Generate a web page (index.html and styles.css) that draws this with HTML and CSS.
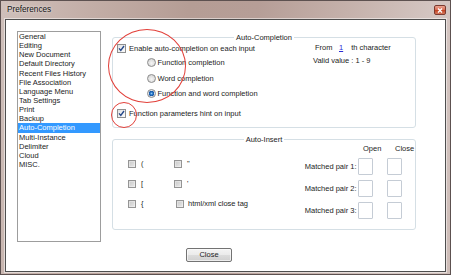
FILE: index.html
```html
<!DOCTYPE html>
<html>
<head>
<meta charset="utf-8">
<title>Preferences</title>
<link rel="stylesheet" href="styles.css">
</head>
<body>
<div class="window">
  <div class="titlebar">
    <span class="title">Preferences</span>
    <span class="winclose"><svg width="6" height="5" viewBox="0 0 6 5"><path d="M1 0.5 L5 4.5 M5 0.5 L1 4.5" stroke="#fff" stroke-width="1.3"/></svg></span>
  </div>
  <div class="client">
    <div class="main">
      <ul class="list">
        <li>General</li>
        <li>Editing</li>
        <li>New Document</li>
        <li>Default Directory</li>
        <li>Recent Files History</li>
        <li>File Association</li>
        <li>Language Menu</li>
        <li>Tab Settings</li>
        <li>Print</li>
        <li>Backup</li>
        <li class="sel">Auto-Completion</li>
        <li>Multi-Instance</li>
        <li>Delimiter</li>
        <li>Cloud</li>
        <li>MISC.</li>
      </ul>
      <div class="panels">
        <section class="group">
          <div class="group-title"><span>Auto-Completion</span></div>
          <div class="g1-body">
            <div class="col-left">
              <div class="row"><span class="cb checked"><svg width="7" height="7" viewBox="0 0 7 7"><path d="M1 3.4 L2.8 5.4 L6 1" fill="none" stroke="#24488a" stroke-width="1.4"/></svg></span>Enable auto-completion on each input</div>
              <div class="radios">
                <div class="row rrow"><span class="rb"></span>Function completion</div>
                <div class="row rrow"><span class="rb"></span>Word completion</div>
                <div class="row rrow"><span class="rb on"></span>Function and word completion</div>
              </div>
              <div class="row hint"><span class="cb checked"><svg width="7" height="7" viewBox="0 0 7 7"><path d="M1 3.4 L2.8 5.4 L6 1" fill="none" stroke="#24488a" stroke-width="1.4"/></svg></span>Function parameters hint on input</div>
            </div>
            <div class="col-right">
              <div class="from">From<span class="num">1</span>th character</div>
              <div>Valid value : 1 - 9</div>
            </div>
          </div>
        </section>
        <section class="group">
          <div class="group-title"><span>Auto-Insert</span></div>
          <div class="g2-body">
            <div class="checks">
              <div class="item"><span class="cb2"></span>(</div>
              <div class="item"><span class="cb2"></span>"</div>
              <div class="item"><span class="cb2"></span>[</div>
              <div class="item"><span class="cb2"></span>'</div>
              <div class="item"><span class="cb2"></span>{</div>
              <div class="item shifted"><span class="cb2"></span>html/xml close tag</div>
            </div>
            <div class="pairs">
              <span></span>
              <span class="head h-open">Open</span>
              <span class="head h-close">Close</span>
              <span class="plabel">Matched pair 1:</span><span class="edit"></span><span class="edit"></span>
              <span class="plabel">Matched pair 2:</span><span class="edit"></span><span class="edit"></span>
              <span class="plabel">Matched pair 3:</span><span class="edit"></span><span class="edit"></span>
            </div>
          </div>
        </section>
      </div>
    </div>
    <div class="footer"><button class="btn">Close</button></div>
  </div>
  <span class="mark big"></span>
  <span class="mark small"></span>
</div>
</body>
</html>
```

FILE: styles.css
```css
html, body {
  margin: 0;
  padding: 0;
  background: #fff;
}
body {
  font-family: "Liberation Sans", Arial, sans-serif;
  font-size: 7.5px;
  line-height: 11px;
  color: #1c1c1c;
}
.window {
  position: relative;
  width: 451px;
  height: 275px;
  box-sizing: border-box;
  border: 1px solid #5d5150;
  padding: 0 4px 2px 4px;
  display: flex;
  flex-direction: column;
  background: linear-gradient(100deg, #cfc0bb 0%, #c3aea7 18%, #b59d95 38%, #b69e97 52%, #c5b1ab 70%, #d4c6c2 88%, #cdbcb7 100%);
}
.titlebar {
  height: 18px;
  display: flex;
  justify-content: space-between;
  align-items: flex-start;
}
.title {
  padding-left: 2px;
  line-height: 18px;
  font-size: 8.2px;
  color: #111;
  text-shadow: 0 0 3px rgba(255, 255, 255, 0.8);
}
.winclose {
  margin-top: 4px;
  width: 12px;
  height: 10px;
  box-sizing: border-box;
  border: 1px solid #7b3a30;
  border-radius: 2px;
  background: linear-gradient(#eba592, #d8684f 50%, #c2401f 52%, #d67a5e);
  display: flex;
  align-items: center;
  justify-content: center;
}
.winclose svg { display: block; }
.client {
  flex: 1;
  background: #fff;
  border: 1px solid #4e4e4e;
  box-shadow: 0 0 0 1px rgba(255, 255, 255, 0.5);
  display: flex;
  flex-direction: column;
}
.main {
  display: flex;
  padding: 11px 0 0 11px;
}
.list {
  margin: 0;
  padding: 0;
  list-style: none;
  width: 84px;
  height: 211px;
  box-sizing: border-box;
  border: 1px solid #9d9d9d;
}
.list li {
  height: 9.15px;
  line-height: 9.15px;
  padding-left: 1px;
  white-space: nowrap;
}
.list li.sel {
  background: #3399ff;
  color: #fff;
}
.panels {
  margin-left: 11px;
  margin-top: 6px;
  width: 304px;
  display: flex;
  flex-direction: column;
  gap: 11px;
}
.group {
  position: relative;
  height: 91px;
  box-sizing: border-box;
  border: 1px solid #d5dfe5;
  border-radius: 3px;
}
.group-title {
  position: absolute;
  top: -6px;
  left: 0;
  right: 0;
  text-align: center;
  line-height: 11px;
}
.group-title span {
  background: #fff;
  padding: 0 2px;
}
.g1-body {
  display: flex;
  padding: 5px 0 0 4px;
}
.col-left {
  width: 196px;
  display: flex;
  flex-direction: column;
}
.row {
  display: flex;
  align-items: center;
  height: 11px;
  gap: 3px;
  white-space: nowrap;
}
.cb {
  width: 9px;
  height: 9px;
  box-sizing: border-box;
  border: 1px solid #8e8f8f;
  background: linear-gradient(135deg, #e2e2e2, #fbfbfb);
  display: flex;
  align-items: center;
  justify-content: center;
}
.cb svg { display: block; }
.radios {
  margin-top: 3px;
  margin-left: 30px;
  display: flex;
  flex-direction: column;
  gap: 4.5px;
}
.rrow { gap: 1.5px; }
.rb {
  width: 9px;
  height: 9px;
  box-sizing: border-box;
  border-radius: 50%;
  border: 1px solid #8c8c8c;
  background: radial-gradient(circle at 50% 60%, #f6f6f6, #cdcdcd);
}
.rb.on {
  background: radial-gradient(circle at 50% 50%, #8ec6f0 0, #2a78c8 1.3px, #124f9c 2.6px, #dfe6ee 3px, #cfd6de 4.5px);
}
.hint {
  margin-top: 9px;
}
.col-right {
  margin-top: -1px;
  line-height: 12.5px;
  white-space: nowrap;
}
.from {
  padding-left: 2px;
}
.num {
  color: #2b2bd6;
  text-decoration: underline;
  margin: 0 8px 0 6.5px;
}
.g2-body {
  display: flex;
  justify-content: space-between;
  padding: 5px 13px 0 15px;
}
.checks {
  margin-top: 13px;
  display: grid;
  grid-template-columns: 46px auto;
  grid-auto-rows: 11px;
  row-gap: 9px;
}
.item {
  display: flex;
  align-items: center;
  gap: 5px;
  white-space: nowrap;
}
.item.shifted {
  margin-left: 2px;
  gap: 4px;
}
.cb2 {
  width: 8px;
  height: 8px;
  box-sizing: border-box;
  border: 1px solid #959595;
  background: linear-gradient(135deg, #c9c9c9, #e9e9e9);
  box-shadow: inset 0 0 0 1px rgba(255, 255, 255, 0.35);
}
.pairs {
  display: grid;
  grid-template-columns: 56px 29px 15px;
  grid-template-rows: 8px 17px 17px 17px;
  row-gap: 5px;
}
.head {
  line-height: 8px;
  white-space: nowrap;
}
.h-open { padding-left: 5px; }
.h-close { padding-left: 8px; }
.plabel {
  align-self: center;
  text-align: right;
  padding-right: 1.5px;
  white-space: nowrap;
}
.edit {
  width: 15px;
  height: 17px;
  box-sizing: border-box;
  border: 1px solid #c5ccd5;
  border-radius: 1px;
  background: #fff;
}
.footer {
  margin-top: 6px;
  padding-left: 180px;
}
.btn {
  width: 46px;
  height: 14px;
  padding: 0;
  margin: 0;
  box-sizing: border-box;
  font-family: "Liberation Sans", Arial, sans-serif;
  font-size: 7.5px;
  line-height: 12px;
  color: #1c1c1c;
  border: 1px solid #737373;
  border-radius: 2px;
  background: linear-gradient(#f4f4f4, #ebebeb 48%, #dcdcdc 52%, #d0d0d0);
  box-shadow: inset 0 0 0 1px rgba(255, 255, 255, 0.6);
}
.mark {
  position: absolute;
  box-sizing: border-box;
  border: 1px solid #e2403a;
  border-radius: 50%;
  pointer-events: none;
}
.mark.big {
  left: 107px;
  top: 28px;
  width: 78px;
  height: 74px;
}
.mark.small {
  left: 110px;
  top: 101px;
  width: 26px;
  height: 26px;
}
```
